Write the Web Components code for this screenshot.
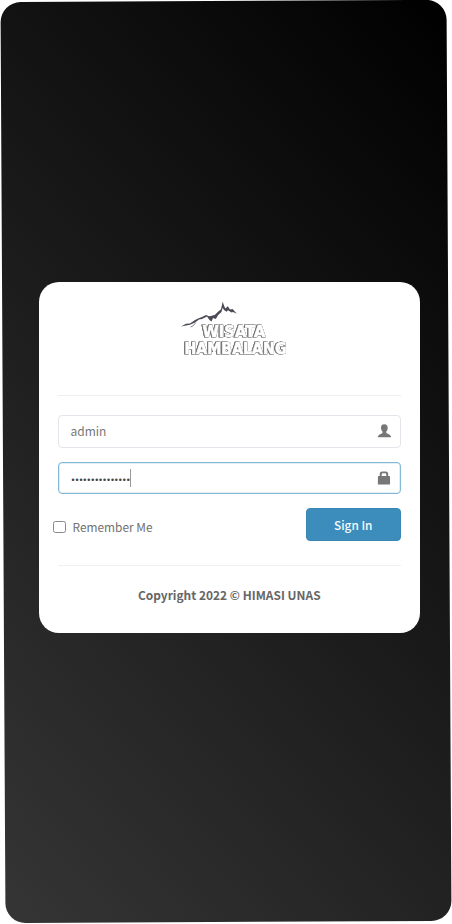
<!DOCTYPE html>
<html lang="en">
<head>
<meta charset="utf-8">
<title>Wisata Hambalang</title>
<style>
html,body{margin:0;background:#fff;height:924px;overflow:hidden}
body{font-family:"Noto Sans CJK SC","Open Sans",sans-serif;color:#666}
</style>
</head>
<body>
<login-page>
  <login-card>
    <brand-logo></brand-logo>
    <login-form></login-form>
    <strong slot="footer">Copyright 2022 © HIMASI UNAS</strong>
  </login-card>
</login-page>
<script>
const define = (name, html) => customElements.define(name, class extends HTMLElement {
  constructor() {
    super();
    const t = document.createElement('template');
    t.innerHTML = html;
    this.attachShadow({mode: 'open'}).append(t.content.cloneNode(true));
  }
});

define('login-page', `
<style>
:host{display:grid;grid-template:924px/452px;overflow:hidden}
.back{grid-area:1/1;width:446.4px;height:920.8px;margin:1.2px 0 0 2.6px;border-radius:20px;background:linear-gradient(228deg,#000,#353535);transform:rotate(-.31deg)}
.front{grid-area:1/1;z-index:1;padding:282px 0 0 39px}
</style>
<div class="back"></div><div class="front"><slot></slot></div>`);

define('login-card', `
<style>
:host{display:flex;flex-direction:column;box-sizing:border-box;width:380.5px;height:350.5px;padding:18px 18.5px 0;border-radius:20px;background:#fff}
footer{margin-top:24.5px;border-top:1px solid #f0f0f1;padding-top:18.5px;text-align:center;font-size:11.95px;line-height:20px;color:#666}
</style>
<slot></slot>
<footer><slot name="footer"></slot></footer>`);

define('brand-logo', `
<style>
:host{display:block;height:95px;border-bottom:1px solid #efeff0;padding-left:122.5px}
svg{display:block;overflow:visible}
text{font-family:"DejaVu Sans",sans-serif;font-weight:700;fill:#fff;stroke:#fff;stroke-width:.7px;stroke-linejoin:miter;filter:drop-shadow(.5px .2px .3px #555) drop-shadow(-.5px 0 .3px #777) drop-shadow(0 .5px .3px #888)}
</style>
<svg width="110" height="72" viewBox="0 0 110 72">
<path d="M1 26.5 6 23.7 10 23.4 15 20 18.6 18.2 22 17 26 14.9 29 16.3 31 16 35 14.7 38 11.8 41 9.2 42.7 1.8 44 5.5 45.3 8.4 47.8 6.3 50 9.6 52.6 9 56.8 13.8 53 12 51.5 12.6 48 10.3 46.5 11.8 44 10 42.7 7.8 41.5 12 38.2 15 35.8 19 33 18 31.5 21.6 29.5 20 27 16.4 22 19 19 19.6 15 22.6 10 24.8Z" fill="#4b4a56"/>
<path d="M10.5 27 13 25.9 15.8 22.6" fill="none" stroke="#77767f" stroke-width=".9"/>
<text x="22.5" y="37" font-size="16" textLength="63" lengthAdjust="spacingAndGlyphs">WISATA</text>
<text x="4.5" y="53.6" font-size="15.5" textLength="102" lengthAdjust="spacingAndGlyphs">HAMBALANG</text>
</svg>`);

define('text-field', `
<style>
:host{display:flex;align-items:center;justify-content:space-between;box-sizing:border-box;height:32.5px;padding:0 8px 0 12px;border:1.5px solid #e4e4ea;border-radius:4px;font-size:12px;line-height:20px;color:#777}
:host([active]){border:1px solid #85b7d6;box-shadow:inset 0 0 0 .5px #c4dfee}
</style>
<slot></slot><slot name="icon"></slot>`);

define('login-form', `
<style>
:host{display:flex;flex-direction:column;padding-top:19px;gap:14px}
.row{display:flex;justify-content:space-between;margin-left:-4.5px}
label{display:flex;align-items:center;gap:7px;font-size:11.9px;line-height:20px;height:20px;margin-top:9px;color:#707070}
i{box-sizing:border-box;width:12.5px;height:12.5px;border:1px solid #888;border-radius:2.5px}
button{width:95.5px;height:32.5px;padding:1px 0 0;border:1px solid #3986b5;border-radius:4px;background:#3c8dbc;color:#f5fafc;font:500 11.8px/20px "Noto Sans CJK SC",sans-serif}
.pw{display:flex;align-items:center;color:#444}
.dots{font:8.5px/20px "DejaVu Sans",sans-serif;display:flex;padding-top:3.5px}
.dots span{width:3.95px}
.caret{width:1.4px;height:18px;background:#999}
svg{display:block;fill:#777}
</style>
<text-field><span>admin</span>
<svg slot="icon" width="15" height="14" viewBox="0 0 15 14"><path d="M7.3.3C9.6.3 10.8 1.8 10.7 4 10.6 6 9.9 7 9.3 7.6V9.1C10 10 14 10.3 14.2 13.3H.8C1 10.3 5 10 5.5 9.1V7.6C4.8 7 4.1 6 4 4 3.9 1.8 5 .3 7.3.3Z"/></svg>
</text-field>
<text-field active><span class="pw"><span class="dots" id="dots"></span><span class="caret"></span></span>
<svg slot="icon" width="15" height="14" viewBox="0 0 15 14"><path fill-rule="evenodd" d="M2.7 5V3.2Q2.7.5 5.2.5H8.7Q11.2.5 11.2 3.2V5H12.3Q13 5 13 5.7V13.4H.9V5.7Q.9 5 1.6 5ZM4.7 5H9.3V3.4Q9.3 2.2 8.2 2.2H5.8Q4.7 2.2 4.7 3.4Z"/></svg>
</text-field>
<div class="row"><label><i></i>Remember Me</label><button>Sign In</button></div>`);

const dots = document.querySelector('login-form').shadowRoot.getElementById('dots');
for (let n = 0; n < 15; n++) {
  const s = document.createElement('span');
  s.textContent = '•';
  dots.append(s);
}
</script>
</body>
</html>
